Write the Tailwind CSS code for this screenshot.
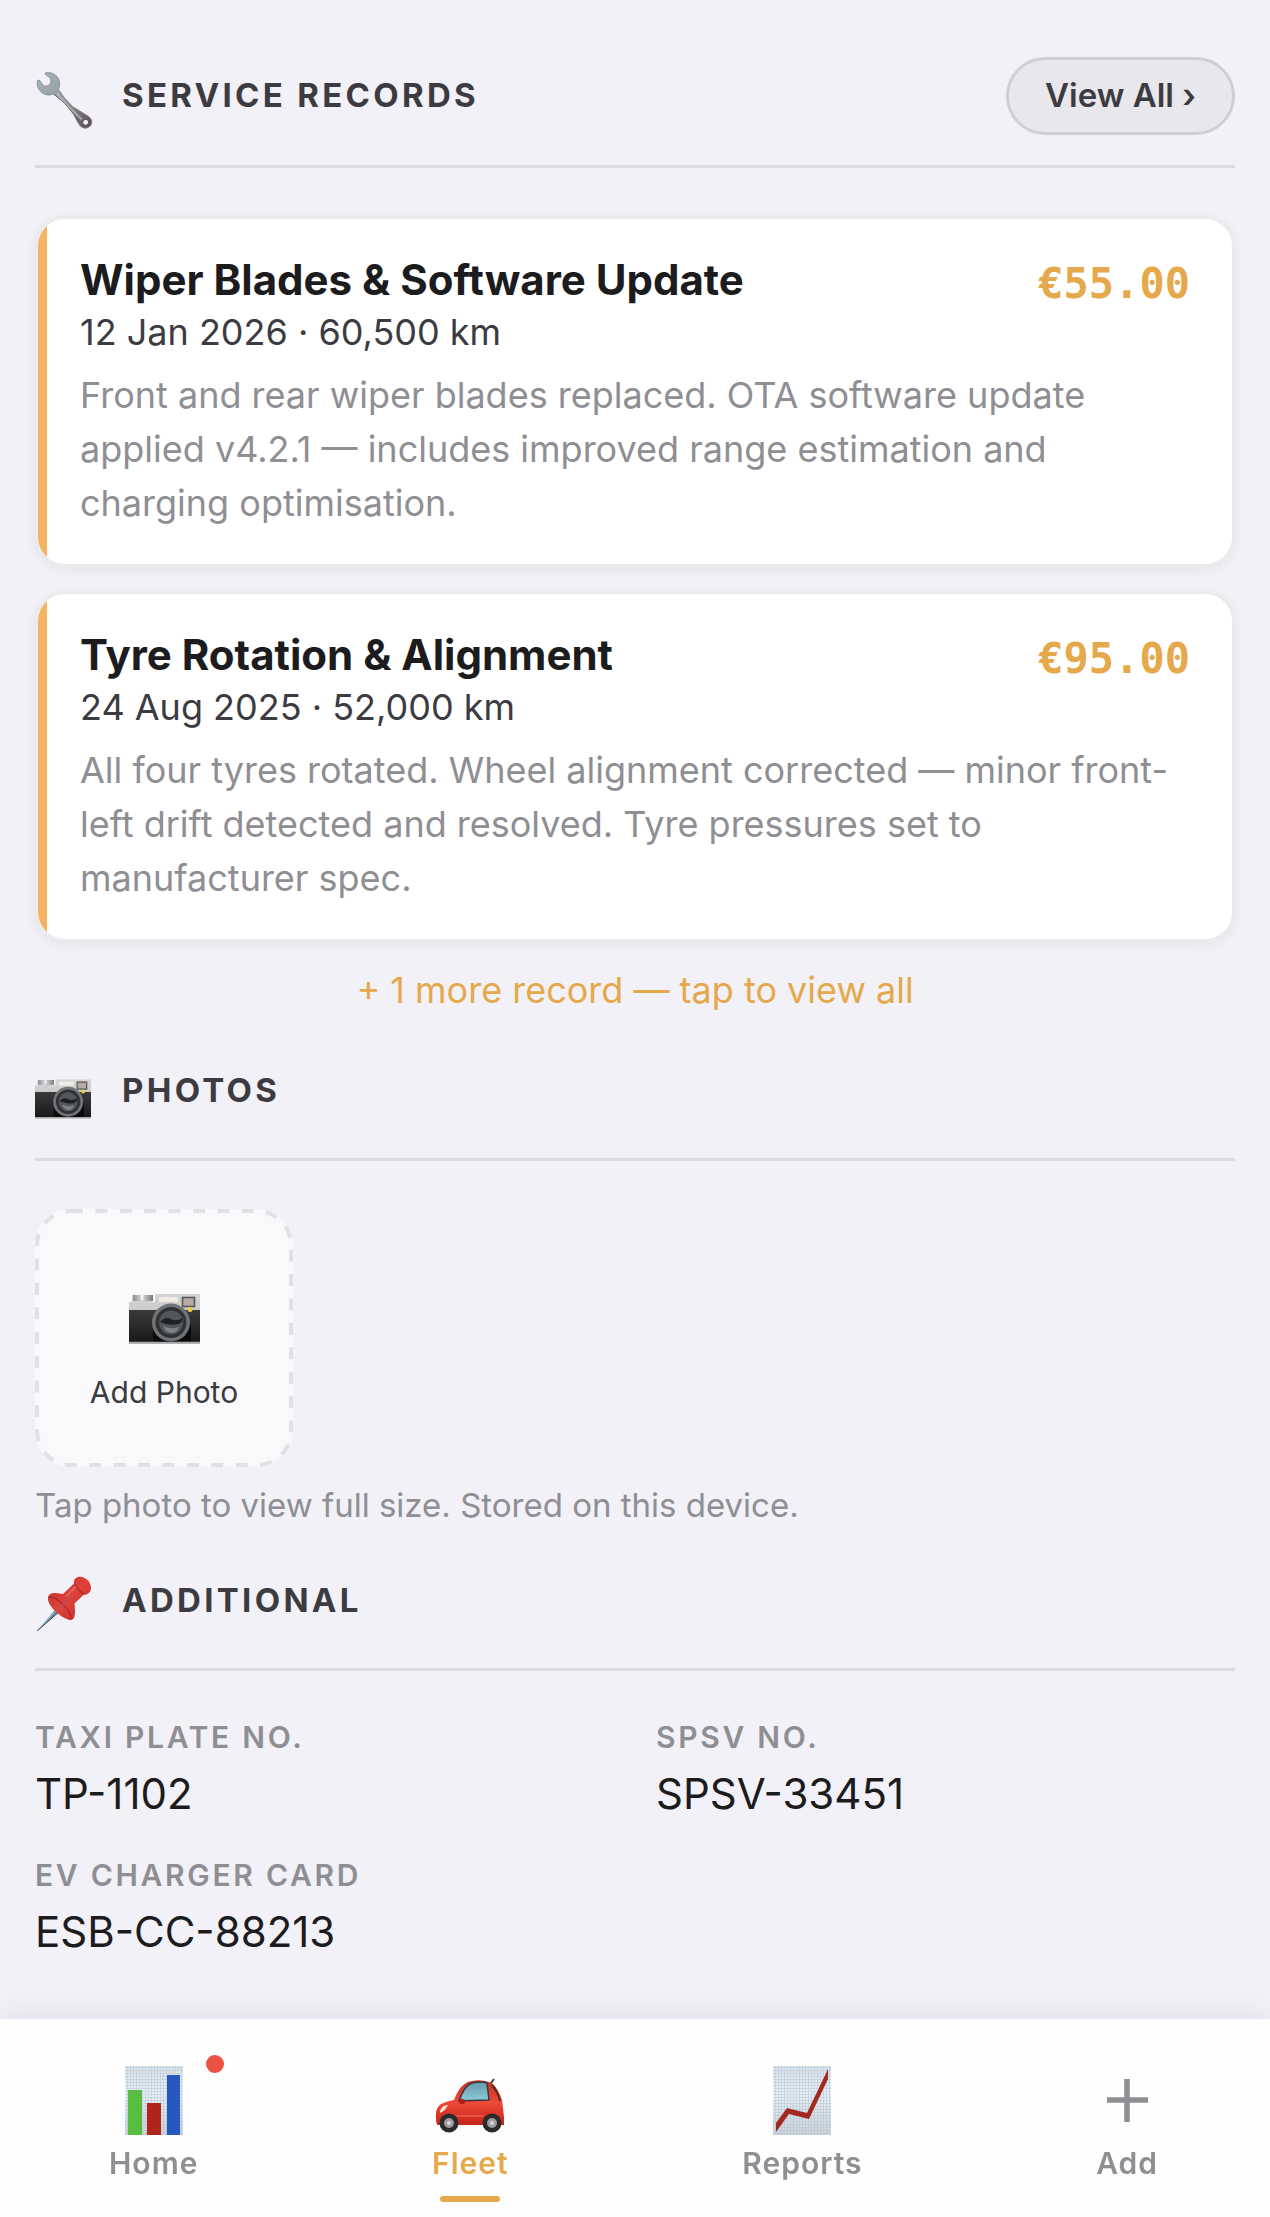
<!DOCTYPE html>
<html lang="en">
<head>
    <meta charset="UTF-8">
    <meta name="viewport" content="width=device-width, initial-scale=1.0">
    <title>Fleet - Vehicle Details</title>
    <script src="https://cdn.jsdelivr.net/npm/@tailwindcss/browser@4"></script>
</head>
<body class="bg-[#f2f1f7] font-['Inter',sans-serif] text-[#1c1c1e] min-h-screen">

    <!-- Shared icon artwork -->
    <svg class="absolute size-0" aria-hidden="true">
        <defs>
            <linearGradient id="silver" x1="0" y1="0" x2="0" y2="1">
                <stop offset="0" stop-color="#d6d6d6"/><stop offset="1" stop-color="#b4b5b6"/>
            </linearGradient>
            <linearGradient id="leather" x1="0" y1="0" x2="0" y2="1">
                <stop offset="0" stop-color="#3a3a3b"/><stop offset="1" stop-color="#19191a"/>
            </linearGradient>
            <linearGradient id="knob" x1="0" y1="0" x2="1" y2="0">
                <stop offset="0" stop-color="#8b8d8f"/><stop offset=".45" stop-color="#d9dadb"/><stop offset="1" stop-color="#77797b"/>
            </linearGradient>
            <linearGradient id="steel" x1="0" y1="0" x2="1" y2="1">
                <stop offset="0" stop-color="#a9b5be"/><stop offset=".35" stop-color="#98a1a9"/><stop offset=".7" stop-color="#7b777e"/><stop offset="1" stop-color="#5c4b4d"/>
            </linearGradient>
            <linearGradient id="pinRed" x1="0" y1="0" x2="1" y2="1">
                <stop offset="0" stop-color="#b92f2d"/><stop offset=".5" stop-color="#e0413a"/><stop offset="1" stop-color="#c02c2b"/>
            </linearGradient>
            <linearGradient id="paint" x1="0" y1="0" x2="0" y2="1">
                <stop offset="0" stop-color="#c92f22"/><stop offset=".5" stop-color="#ee4a38"/><stop offset="1" stop-color="#c6231a"/>
            </linearGradient>
            <linearGradient id="glass" x1="0" y1="0" x2="0" y2="1">
                <stop offset="0" stop-color="#6798aa"/><stop offset="1" stop-color="#8fcbd9"/>
            </linearGradient>
            <linearGradient id="paper" x1="0" y1="0" x2="0" y2="1">
                <stop offset="0" stop-color="#dce3e9"/><stop offset=".4" stop-color="#eaf0f5"/><stop offset="1" stop-color="#ccd3d8"/>
            </linearGradient>
            <pattern id="grid" width="3" height="3" patternUnits="userSpaceOnUse">
                <path d="M0 .5H3M.5 0V3" stroke="#a9c0d3" stroke-width=".7" opacity=".65"/>
            </pattern>
            <symbol id="camera" viewBox="0 0 71 50">
                <path d="M0 8h3V1h9v5h2V1h9v7h3V0h45v50H0z" fill="url(#silver)"/>
                <path d="M4 1h8v6H4zM15 1h9v6h-9z" fill="url(#knob)"/>
                <path d="M0 16h71v32H0z" fill="url(#leather)"/>
                <path d="M24 30h38v18H24z" fill="#0b0b0c"/>
                <rect x="30" y="3" width="19" height="5" rx="1.5" fill="#efede6"/>
                <rect x="53.5" y="3.5" width="12" height="9" fill="#b5aaa4" stroke="#55575a" stroke-width="1.6"/>
                <circle cx="42" cy="28.5" r="19" fill="#717477"/>
                <circle cx="42" cy="28.5" r="15.5" fill="#303234"/>
                <circle cx="42" cy="28.5" r="12" fill="#53565a"/>
                <path d="M31 28q5-6 11-3t11-1q1 5-4 6-9 2-18-2" fill="#1f2022"/>
                <path d="M34 32q8 4 16 1-2 6-8 6-6-1-8-7" fill="#7f8387"/>
                <circle cx="61" cy="15.5" r="2.5" fill="#f0cb4b"/>
                <path d="M0 48.5h71" stroke="#a8a9ab" stroke-width="1.5"/>
            </symbol>
        </defs>
    </svg>

    <main class="px-[35px] pt-[57px] pb-[240px]">

        <!-- Service records -->
        <section>
            <header class="flex items-center justify-between pb-[30px] border-b-3 border-[#dcdbe0]">
                <div class="flex items-center gap-6">
                    <svg class="w-[63px] h-[74px] pt-2" viewBox="0 0 63 63" aria-hidden="true">
                        <path d="M2.300 12.200Q3.500 11 5 12.200L7 15.500Q9.500 18.500 12 17.500Q15.500 16.500 16 13.500Q16 10.500 14.500 8.800L10.500 6Q9.500 4.500 11 4.200Q18 3.500 22 8Q26.500 13 23.500 21Q29 30 37.500 38L53 47.500Q58 51 56.500 55.500Q54 60.500 48.500 59.500Q45 58.500 43 54Q36 38 18.500 25.500Q13 28 8 25Q1 20 2.300 12.200Z" fill="url(#steel)" stroke="#7b848c" stroke-width=".8"/>
                        <path d="M22 25Q31 36 47 51" stroke="#c6cbcf" stroke-width="2" fill="none" opacity=".6"/>
                        <path d="M18.500 25.500Q36 38 43.500 54" stroke="#55585d" stroke-width="1" fill="none" opacity=".7"/>
                        <circle cx="50.7" cy="53.8" r="3" fill="#f2f1f7" stroke="#4e4748" stroke-width="1"/>
                    </svg>
                    <h2 class="text-[33px] font-bold tracking-widest text-[#3c3b41]">SERVICE RECORDS</h2>
                </div>
                <button type="button" class="h-[78px] px-9 rounded-full border-3 border-[#cfced3] bg-[#e8e7ec] text-[33px] font-semibold text-[#3c3b41]">View All ›</button>
            </header>

            <div class="mt-12 flex flex-col gap-6">
                <article class="rounded-[30px] border-3 border-[#ebebed] bg-white shadow-[0_3px_12px_rgba(0,0,0,0.06)]">
                    <div class="rounded-[27px] overflow-hidden flex">
                        <div class="w-[9px] shrink-0 bg-[#f3b562]"></div>
                        <div class="grow pl-[33px] pr-[42px] pt-[35px] pb-[34px]">
                            <div class="flex items-start justify-between">
                                <h3 class="text-[42px] leading-[51px] font-bold">Wiper Blades &amp; Software Update</h3>
                                <p class="mt-1 text-[42px] leading-[52px] font-bold font-['DejaVu_Sans_Mono',monospace] text-[#e5a84b]">€55.00</p>
                            </div>
                            <p class="text-[36px] leading-[44px] text-[#3c3b41]">12 Jan 2026 · 60,500 km</p>
                            <p class="mt-[14px] text-[36px] leading-[54px] text-[#8e8e93]">Front and rear wiper blades replaced. OTA software update applied v4.2.1 — includes improved range estimation and charging optimisation.</p>
                        </div>
                    </div>
                </article>

                <article class="rounded-[30px] border-3 border-[#ebebed] bg-white shadow-[0_3px_12px_rgba(0,0,0,0.06)]">
                    <div class="rounded-[27px] overflow-hidden flex">
                        <div class="w-[9px] shrink-0 bg-[#f3b562]"></div>
                        <div class="grow pl-[33px] pr-[42px] pt-[35px] pb-[34px]">
                            <div class="flex items-start justify-between">
                                <h3 class="text-[42px] leading-[51px] font-bold">Tyre Rotation &amp; Alignment</h3>
                                <p class="mt-1 text-[42px] leading-[52px] font-bold font-['DejaVu_Sans_Mono',monospace] text-[#e5a84b]">€95.00</p>
                            </div>
                            <p class="text-[36px] leading-[44px] text-[#3c3b41]">24 Aug 2025 · 52,000 km</p>
                            <p class="mt-[14px] text-[36px] leading-[54px] text-[#8e8e93]">All four tyres rotated. Wheel alignment corrected — minor front-left drift detected and resolved. Tyre pressures set to manufacturer spec.</p>
                        </div>
                    </div>
                </article>
            </div>

            <button type="button" class="block mx-auto mt-6 text-[36px] leading-[48px] text-[#e5a84b]">+ 1 more record — tap to view all</button>
        </section>

        <!-- Photos -->
        <section class="mt-10">
            <header class="flex items-center gap-6 pb-[30px] border-b-3 border-[#dcdbe0]">
                <svg class="w-[63px] h-[74px] pt-4 pr-[7px]" viewBox="0 0 71 50" aria-hidden="true"><use href="#camera"/></svg>
                <h2 class="text-[33px] font-bold tracking-widest text-[#3c3b41]">PHOTOS</h2>
            </header>
            <button type="button" class="relative mt-12 w-[258px] h-[258px] rounded-[36px] bg-[#f9f9fb] flex flex-col items-center justify-center gap-[30px] pt-7">
                <!-- Dashed outline -->
                <svg class="absolute inset-0 size-full" viewBox="0 0 258 258" aria-hidden="true">
                    <rect x="2" y="2" width="254" height="254" rx="34" fill="none" stroke="#e1e1e3" stroke-width="4" stroke-dasharray="12 12.4"/>
                </svg>
                <svg class="w-[71px] h-[50px]" viewBox="0 0 71 50" aria-hidden="true"><use href="#camera"/></svg>
                <span class="text-[30px] leading-[36px] text-[#3c3b41]">Add Photo</span>
            </button>
            <p class="mt-[14px] text-[33px] leading-[48px] text-[#8e8e93]">Tap photo to view full size. Stored on this device.</p>
        </section>

        <!-- Additional -->
        <section class="mt-[35px]">
            <header class="flex items-center gap-6 pb-[30px] border-b-3 border-[#dcdbe0]">
                <svg class="w-[63px] h-[74px] pt-2" viewBox="0 0 63 63" aria-hidden="true">
                    <path d="M2.300 57.300L22 34L25 37Z" fill="#5a7f9c"/>
                    <path d="M3 56.500L23 35" stroke="#a9cfe6" stroke-width="1"/>
                    <path d="M2.300 57.300L25 37.500" stroke="#33383f" stroke-width="1"/>
                    <path d="M13 24Q14 19 20 19.500Q25 20 28 20.500L39 10Q38 5 43 3.500Q49 2.500 54 8Q58 15 54 19.500Q51 22 49 21L39.500 30Q40.500 38 39.500 43Q38 48 33 46Q25 43 19 36.500Q12 29 13 24Z" fill="url(#pinRed)"/>
                    <path d="M14 24Q18 22 27 30Q36 38 36 45" stroke="#93222a" stroke-width="1.5" fill="none" opacity=".6"/>
                    <path d="M40 10Q43 18 50 20.500" stroke="#9c2426" stroke-width="1.5" fill="none" opacity=".7"/>
                    <path d="M31 23L41 13" stroke="#f0857c" stroke-width="2" opacity=".5"/>
                    <path d="M24 36L37 22" stroke="#a9526d" stroke-width="1.500" opacity=".8"/>
                </svg>
                <h2 class="text-[33px] font-bold tracking-widest text-[#3c3b41]">ADDITIONAL</h2>
            </header>
            <dl class="mt-12 grid grid-cols-2 gap-x-[42px] gap-y-9">
                <div>
                    <dt class="text-[30px] leading-[36px] font-semibold tracking-[0.09em] text-[#8e8e93]">TAXI PLATE NO.</dt>
                    <dd class="mt-3 text-[42px] leading-[54px]">TP-1102</dd>
                </div>
                <div>
                    <dt class="text-[30px] leading-[36px] font-semibold tracking-[0.09em] text-[#8e8e93]">SPSV NO.</dt>
                    <dd class="mt-3 text-[42px] leading-[54px]">SPSV-33451</dd>
                </div>
                <div>
                    <dt class="text-[30px] leading-[36px] font-semibold tracking-[0.09em] text-[#8e8e93]">EV CHARGER CARD</dt>
                    <dd class="mt-3 text-[42px] leading-[54px]">ESB-CC-88213</dd>
                </div>
            </dl>
        </section>
    </main>

    <!-- Bottom tab bar -->
    <nav class="fixed bottom-0 inset-x-0 h-[198px] pl-[109px] pr-28 pt-[42px] flex items-start justify-between bg-[#fefefe] shadow-[0_-3px_30px_rgba(0,0,0,0.08)]">
        <a href="#" class="relative flex flex-col items-center gap-2 text-[#8e8e93]">
            <svg class="h-[74px] w-[60px]" viewBox="0 0 60 74" aria-hidden="true">
                <path d="M1 5h58v69H1z" fill="url(#paper)"/><path d="M1 5h58v69H1z" fill="url(#grid)"/>
                <path d="M4 29h14v45H4z" fill="#59bd43"/><path d="M23 42h14v32H23z" fill="#b0241c"/><path d="M43 14h13v60H43z" fill="#2658bd"/>
            </svg>
            <span class="text-[30px] leading-[40px] font-semibold tracking-[1px]">Home</span>
            <i class="absolute -top-[6px] -right-[26px] size-[18px] rounded-full bg-[#eb5244]"></i>
        </a>
        <a href="#" class="relative flex flex-col items-center gap-2 text-[#e5a84b]">
            <svg class="h-[74px] w-[70px]" viewBox="0 0 70 74" aria-hidden="true">
                <path d="M56 22l3-4" stroke="#444" stroke-width="2"/>
                <path d="M1 56Q0 47 6 43Q12 40 19 39Q24 25 33 21Q45 17 57 22Q64 29 67 39L69 56V64H3Q1 64 1 56Z" fill="url(#paint)"/>
                <path d="M24 40Q29 25 37 22Q46 20 52 22L54 39Z" fill="url(#glass)" stroke="#35393d" stroke-width="1.5"/>
                <path d="M57 24Q63 31 65 40" stroke="#5b2a26" stroke-width="2" fill="none"/>
                <path d="M5 50Q7 44 13 44Q11 49 5 52Z" fill="#f7e2dc"/>
                <rect x="24" y="38" width="6" height="5" rx="2" fill="#b51e1a"/>
                <path d="M20 55H48" stroke="#f4786a" stroke-width="1"/>
                <circle cx="14" cy="62" r="9.5" fill="#2b2a2b"/><circle cx="14" cy="62" r="5" fill="#9b9c9e"/><circle cx="14" cy="62" r="2" fill="#d7d7d7"/>
                <circle cx="57" cy="62" r="9.5" fill="#2b2a2b"/><circle cx="57" cy="62" r="5" fill="#9b9c9e"/><circle cx="57" cy="62" r="2" fill="#d7d7d7"/>
            </svg>
            <span class="text-[30px] leading-[40px] font-semibold tracking-[1px]">Fleet</span>
            <i class="absolute -bottom-[19px] left-1/2 -translate-x-1/2 w-[60px] h-[6px] rounded-full bg-[#e5a84b]"></i>
        </a>
        <a href="#" class="flex flex-col items-center gap-2 text-[#8e8e93]">
            <svg class="h-[74px] w-[60px]" viewBox="0 0 60 74" aria-hidden="true">
                <path d="M1 5h58v69H1z" fill="url(#paper)"/><path d="M1 5h58v69H1z" fill="url(#grid)"/>
                <path d="M4 62L15 47L35 52L56 8V18L37 58L17 53L4 71Z" fill="#a32820"/>
            </svg>
            <span class="text-[30px] leading-[40px] font-semibold tracking-[1px]">Reports</span>
        </a>
        <a href="#" class="flex flex-col items-center gap-2 text-[#8e8e93]">
            <svg class="h-[74px] w-[60px]" viewBox="0 0 60 74" aria-hidden="true">
                <path d="M10 39H51M30 18V61" stroke="#8e8e93" stroke-width="5.5"/>
            </svg>
            <span class="text-[30px] leading-[40px] font-semibold tracking-[1px]">Add</span>
        </a>
    </nav>
</body>
</html>
